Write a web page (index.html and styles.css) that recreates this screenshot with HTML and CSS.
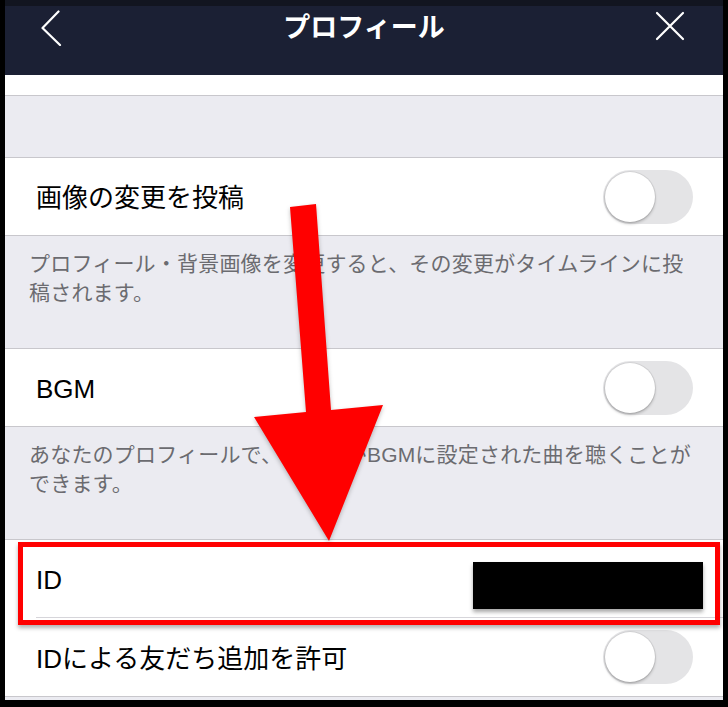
FILE: index.html
```html
<!DOCTYPE html>
<html lang="ja">
<head>
<meta charset="utf-8">
<title>プロフィール</title>
<link rel="stylesheet" href="styles.css">
</head>
<body>
<div class="screen">
  <div class="strip"></div>
  <header class="header">
    <div class="nav">
      <svg class="back" width="22" height="36" viewBox="0 0 22 36"><polyline points="17.5,1.5 1.5,18 19,35" fill="none" stroke="#fff" stroke-width="2.2" stroke-linecap="round" stroke-linejoin="round"/></svg>
      <h1 class="title">プロフィール</h1>
      <svg class="close" width="30" height="30" viewBox="0 0 30 30"><path d="M2 2 L28 28 M28 2 L2 28" stroke="#fff" stroke-width="2.2" stroke-linecap="round"/></svg>
    </div>
  </header>
  <div class="top-cell"></div>
  <div class="gap"></div>
  <section class="group">
    <div class="row">
      <span class="label">画像の変更を投稿</span>
      <span class="toggle"><span class="knob"></span></span>
    </div>
  </section>
  <p class="footer">プロフィール・背景画像を変更すると、その変更がタイムラインに投<br>稿されます。</p>
  <section class="group">
    <div class="row">
      <span class="label">BGM</span>
      <span class="toggle"><span class="knob"></span></span>
    </div>
  </section>
  <p class="footer">あなたのプロフィールで、友だちがBGMに設定された曲を聴くことが<br>できます。</p>
  <section class="group">
    <div class="row">
      <span class="label">ID</span>
    </div>
    <div class="sep"></div>
    <div class="row row-last">
      <span class="label">IDによる友だち追加を許可</span>
      <span class="toggle"><span class="knob"></span></span>
    </div>
  </section>

  <div class="redact"></div>
  <div class="highlight"></div>
  <svg class="arrow" width="718" height="700" viewBox="0 0 718 700"><polygon points="285,207 311,204 326,410 378,405 324,541 249,417 301,412" fill="#ff0000"/></svg>
</div>
</body>
</html>
```
FILE: styles.css
```css
* { box-sizing: border-box; }
html, body { margin: 0; padding: 0; }
body {
  background: #000;
  width: 728px;
  height: 707px;
  overflow: hidden;
  font-family: "Liberation Sans", "Noto Sans CJK JP", sans-serif;
}
.screen {
  position: relative;
  margin-left: 5px;
  width: 718px;
  height: 700px;
  overflow: hidden;
  background: #ebebf1;
}
.strip {
  height: 6px;
  background: #121520;
}
.header {
  height: 69px;
  background: #1b2034;
}
.nav {
  height: 44px;
  display: grid;
  grid-template-columns: 1fr auto 1fr;
  align-items: center;
}
.back {
  justify-self: start;
  margin-left: 36px;
}
.close {
  justify-self: end;
  margin-right: 38px;
  margin-bottom: 4px;
}
.title {
  margin: 0;
  color: #fff;
  font-size: 27px;
  font-weight: 700;
  line-height: 1;
  letter-spacing: 0;
}
.top-cell {
  height: 21px;
  background: #fff;
  border-bottom: 1px solid #c8c7cc;
}
.gap {
  height: 61px;
}
.group {
  background: #fff;
  border-top: 1px solid #c8c7cc;
  border-bottom: 1px solid #c8c7cc;
}
.row {
  height: 77px;
  display: flex;
  align-items: center;
  justify-content: space-between;
  padding: 0 30px 0 31px;
}
.row-last {
  height: 78px;
}
.sep {
  height: 1px;
  margin-left: 31px;
  background: #d6d5da;
}
.label {
  font-size: 26px;
  color: #000;
  line-height: 1;
  margin-top: 3px;
}
.toggle {
  width: 90px;
  height: 54px;
  border-radius: 27px;
  background: #e4e4e6;
  display: flex;
  align-items: center;
  padding: 0 2px;
}
.knob {
  width: 50px;
  height: 50px;
  border-radius: 50%;
  background: #fff;
  box-shadow: 0 2px 3px rgba(0,0,0,0.22), 0 0 0 1px rgba(0,0,0,0.07);
}
.footer {
  margin: 0;
  height: 112px;
  padding: 13px 10px 0 24px;
  font-size: 21px;
  line-height: 29px;
  color: #6b6b70;
  white-space: nowrap;
  letter-spacing: 0.2px;
}
.redact {
  position: absolute;
  left: 468px;
  top: 562px;
  width: 230px;
  height: 47px;
  background: #000;
  box-shadow: 0 3px 4px rgba(0,0,0,0.35);
}
.highlight {
  position: absolute;
  left: 13px;
  top: 542px;
  width: 702px;
  height: 83px;
  border: 5px solid #ff0000;
  box-shadow: 0 3px 4px rgba(0,0,0,0.3);
}
.arrow {
  position: absolute;
  left: 0;
  top: 0;
  filter: drop-shadow(0 2px 2px rgba(0,0,0,0.25));
}
```
